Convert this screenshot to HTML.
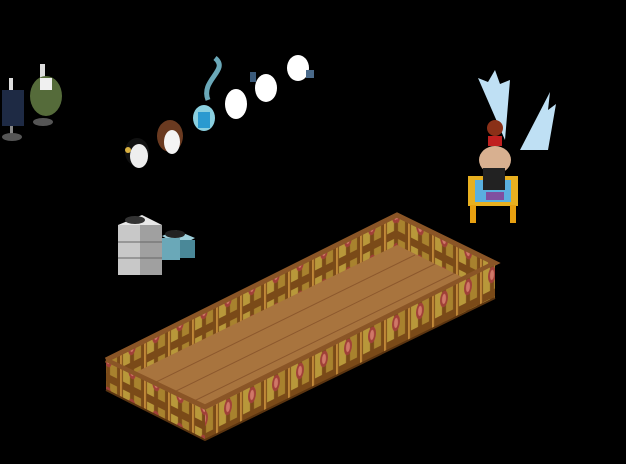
<!DOCTYPE html>
<html><head><style>html,body{margin:0;padding:0;background:#000;width:626px;height:464px;overflow:hidden}</style></head>
<body>
<svg width="626" height="464" viewBox="0 0 626 464" xmlns="http://www.w3.org/2000/svg">
<defs>
<pattern id="railR" width="24" height="36" patternUnits="userSpaceOnUse" patternTransform="skewY(-26.57)">
<rect width="24" height="36" fill="#7a4a18"/>
<rect x="3" y="4" width="7" height="28" fill="#b8983a"/>
<rect x="14" y="4" width="7" height="28" fill="#a8822e"/>
<ellipse cx="12" cy="17" rx="4" ry="8" fill="#a04038"/>
<ellipse cx="12" cy="17" rx="2" ry="5" fill="#d07868"/>
<rect x="0" y="0" width="2" height="36" fill="#c08838"/>
</pattern>
<pattern id="railL" width="24" height="36" patternUnits="userSpaceOnUse" patternTransform="skewY(26.57)">
<rect width="24" height="36" fill="#7a4a18"/>
<rect x="3" y="4" width="7" height="28" fill="#b8983a"/>
<rect x="14" y="4" width="7" height="28" fill="#a8822e"/>
<ellipse cx="12" cy="17" rx="4" ry="8" fill="#a04038"/>
<ellipse cx="12" cy="17" rx="2" ry="5" fill="#d07868"/>
<rect x="0" y="0" width="2" height="36" fill="#c08838"/>
</pattern>
</defs>
<polygon points="106,360 397,215 397,250 130,384" fill="url(#railR)"/>
<polygon points="397,215 495,263 470,282 397,246" fill="url(#railL)"/>
<polygon points="128,376 397,245 472,282 205,412" fill="#a8743e"/>
<g stroke="#7a4622" stroke-width="1" opacity="0.6">
<line x1="150" y1="385" x2="415" y2="255"/>
<line x1="170" y1="394" x2="435" y2="264"/>
<line x1="190" y1="403" x2="455" y2="273"/>
</g>
<polyline points="106,360 397,215 495,263 205,407 106,360" fill="none" stroke="#8a5526" stroke-width="5"/>
<polygon points="106,362 205,410 205,440 106,390" fill="url(#railL)"/>
<polygon points="205,410 495,265 495,298 205,440" fill="url(#railR)"/>
<polyline points="106,390 205,440 495,298" fill="none" stroke="#5a3410" stroke-width="2"/>
<g>
<polygon points="118,225 142,215 162,225 140,235" fill="#e8e8e8"/>
<rect x="118" y="225" width="22" height="50" fill="#c8c8c8"/>
<rect x="140" y="225" width="22" height="50" fill="#a0a0a0"/>
<line x1="118" y1="242" x2="162" y2="242" stroke="#666"/>
<line x1="118" y1="258" x2="162" y2="258" stroke="#666"/>
<polygon points="162,236 176,230 195,238 180,246" fill="#9fd0dc"/>
<rect x="162" y="238" width="18" height="22" fill="#6aa8b8"/>
<rect x="180" y="240" width="15" height="18" fill="#4a8898"/>
<ellipse cx="135" cy="220" rx="10" ry="4" fill="#333"/>
<ellipse cx="175" cy="234" rx="10" ry="4" fill="#222"/>
</g>
<g>
<rect x="9" y="78" width="4" height="12" fill="#ddd"/>
<rect x="2" y="90" width="22" height="36" fill="#1e2a44"/>
<rect x="10" y="126" width="3" height="10" fill="#888"/>
<ellipse cx="12" cy="137" rx="10" ry="4" fill="#555"/>
<rect x="40" y="64" width="5" height="14" fill="#ddd"/>
<ellipse cx="46" cy="96" rx="16" ry="20" fill="#556b3a"/>
<rect x="40" y="78" width="12" height="12" fill="#f0f0f0"/>
<ellipse cx="43" cy="122" rx="10" ry="4" fill="#555"/>
</g>
<g>
<ellipse cx="137" cy="152" rx="12" ry="14" fill="#111"/>
<ellipse cx="139" cy="156" rx="9" ry="12" fill="#eee"/>
<circle cx="128" cy="150" r="3" fill="#d8b040"/>
<ellipse cx="170" cy="136" rx="13" ry="16" fill="#6a3a20"/>
<ellipse cx="172" cy="142" rx="8" ry="12" fill="#f4f4f4"/>
<ellipse cx="204" cy="118" rx="11" ry="13" fill="#8ad0e0"/>
<rect x="198" y="112" width="12" height="16" fill="#2a9ad0"/>
<path d="M208 100 C200 80 230 70 215 58" stroke="#6aa8b8" stroke-width="5" fill="none"/>
<ellipse cx="236" cy="104" rx="11" ry="15" fill="#fff"/>
<ellipse cx="266" cy="88" rx="11" ry="14" fill="#fff"/>
<rect x="250" y="72" width="6" height="10" fill="#3a5a7a"/>
<ellipse cx="298" cy="68" rx="11" ry="13" fill="#fff"/>
<rect x="306" y="70" width="8" height="8" fill="#4a6a8a"/>
</g>
<g>
<path d="M505 140 L478 78 L488 82 L495 70 L500 84 L510 80 Z" fill="#bfe0f4"/>
<path d="M520 150 L550 92 L548 110 L556 104 L548 150 Z" fill="#bfe0f4"/>
<rect x="468" y="176" width="50" height="30" fill="#e8b020"/>
<rect x="475" y="180" width="36" height="22" fill="#5ab0e0"/>
<rect x="470" y="205" width="6" height="18" fill="#e8a010"/>
<rect x="510" y="205" width="6" height="18" fill="#e8a010"/>
<ellipse cx="495" cy="160" rx="16" ry="14" fill="#d8b090"/>
<rect x="483" y="168" width="22" height="22" fill="#222"/>
<circle cx="495" cy="128" r="8" fill="#8a3018"/>
<rect x="488" y="136" width="14" height="10" fill="#c02020"/>
<rect x="486" y="192" width="18" height="8" fill="#8050a0"/>
</g>
</svg>
</body></html>
